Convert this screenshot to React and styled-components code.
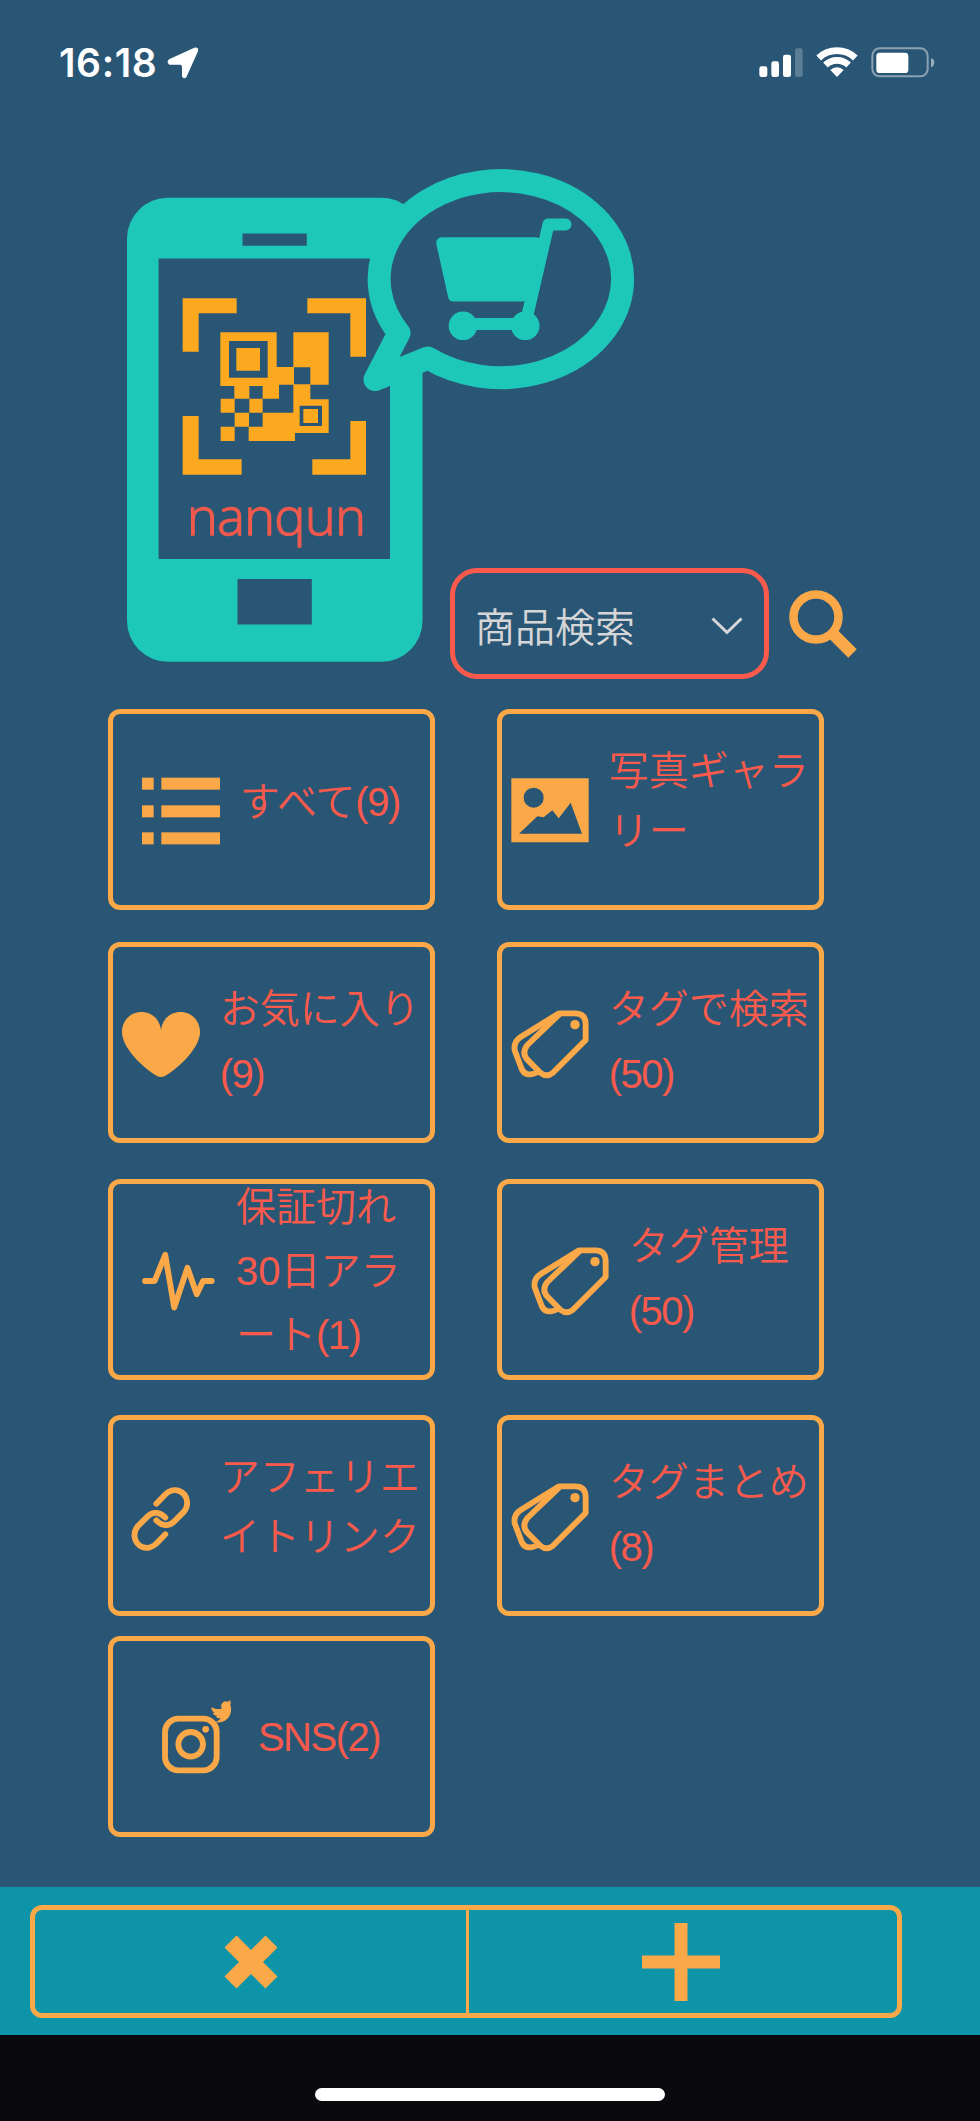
import React from "react";
import styled, { createGlobalStyle } from "styled-components";

const ListIcon = () => (
  <Icon viewBox="0 0 234 234">
    {[20, 103, 184].map((y) => (
      <g key={y}>
        <rect x="0" y={y} width="35" height="36" />
        <rect x="58" y={y} width="176" height="36" />
      </g>
    ))}
  </Icon>
);

const GalleryIcon = () => (
  <Icon viewBox="0 0 234 234">
    <path
      fillRule="evenodd"
      d="M1 22H233V214H1ZM38 80a30 30 0 1 0 60 0a30 30 0 1 0 -60 0ZM24 188H213L179 95L143 142L124 118L98 139L79 136Z"
    />
  </Icon>
);

const HeartIcon = () => (
  <Icon viewBox="0 0 234 234">
    <path d="M117 77C112 45 90 24 58 24C25 24 0 50 0 85C0 130 60 190 105 216Q117 222 129 216C174 190 234 130 234 85C234 50 209 24 176 24C144 24 122 45 117 77Z" />
  </Icon>
);

const TagsIcon = () => (
  <Icon viewBox="0 0 234 234">
    <g className="line">
      <path d="M142 29L29 99Q7 113 11 139L33 197Q41 213 59 211Q69 210 81 204" />
      <path d="M148 28H193Q224 28 224 61V108L125 207Q107 221 89 207L49 167Q31 147 49 123Z" />
    </g>
    <circle cx="192" cy="62" r="14" />
  </Icon>
);

const PulseIcon = () => (
  <Icon viewBox="0 0 220 234" $width={73}>
    <path
      className="line"
      d="M9 120H38L70 41L97 200L137 80L165 160L184 120H210"
    />
  </Icon>
);

const LinkIcon = () => (
  <Icon viewBox="0 0 234 234">
    <g className="line">
      <path d="M103 80L129 53C143 39 160 37 172 42C196 52 203 82 186 104L156 134C140 150 118 147 103 130" />
      <path d="M130 172L104 199C90 213 73 215 61 210C37 200 30 170 47 148L77 118C93 102 115 105 130 122" />
    </g>
  </Icon>
);

const SnsIcon = () => (
  <Icon viewBox="0 0 213 234" $width={71}>
    <g className="line">
      <rect x="9" y="62" width="155" height="155" rx="40" />
      <circle cx="86" cy="139" r="37" />
    </g>
    <circle cx="131" cy="94" r="10" />
    <path
      transform="translate(184 41) rotate(-20) scale(2.8) translate(-12 -12)"
      d="M23.953 4.57a10 10 0 01-2.825.775 4.958 4.958 0 002.163-2.723c-.951.555-2.005.959-3.127 1.184a4.92 4.92 0 00-8.384 4.482C7.69 8.095 4.067 6.13 1.64 3.162a4.822 4.822 0 00-.666 2.475c0 1.71.87 3.213 2.188 4.096a4.904 4.904 0 01-2.228-.616v.06a4.923 4.923 0 003.946 4.827 4.996 4.996 0 01-2.212.085 4.936 4.936 0 004.604 3.417 9.867 9.867 0 01-6.102 2.105c-.39 0-.779-.023-1.17-.067a13.995 13.995 0 007.557 2.209c9.053 0 13.998-7.496 13.998-13.985 0-.21 0-.42-.015-.63A9.935 9.935 0 0024 4.59z"
    />
  </Icon>
);

const rows = [
  {
    gap: 32,
    items: [
      { icon: ListIcon, lines: ["すべて(9)"], lift: 14 },
      { icon: GalleryIcon, lines: ["写真ギャラ", "リー"], lift: 18, leading: 60 },
    ],
  },
  {
    gap: 36,
    items: [
      { icon: HeartIcon, lines: ["お気に入り", "(9)"], lift: 1 },
      { icon: TagsIcon, lines: ["タグで検索", "(50)"], lift: 1 },
    ],
  },
  {
    gap: 35,
    items: [
      {
        icon: PulseIcon,
        lines: ["保証切れ", "30日アラ", "ート(1)"],
        lift: 17,
        leading: 64,
        space: 21.5,
      },
      { icon: TagsIcon, lines: ["タグ管理", "(50)"], lift: 1 },
    ],
  },
  {
    gap: 20,
    items: [
      { icon: LinkIcon, lines: ["アフェリエ", "イトリンク"], lift: 18, leading: 60 },
      { icon: TagsIcon, lines: ["タグまとめ", "(8)"], lift: 1 },
    ],
  },
  { gap: 49, items: [{ icon: SnsIcon, lines: ["SNS(2)"], lift: -2, space: 25 }] },
];

// tighten the counts only
const renderLine = (line) =>
  line
    .split(/(\w*\(\d+\))/)
    .filter(Boolean)
    .map((part) =>
      part.includes("(") ? <Count key={part}>{part}</Count> : part
    );

const StatusBar = () => (
  <Status>
    <div className="left">
      <span>16:18</span>
      <svg width="32" height="32" viewBox="382 51 96 96">
        <path d="M464 53L388 88Q379 97 389 104H421Q427 104 427 110V139Q431 149 440 142L475 64Q478 50 464 53Z" />
      </svg>
    </div>
    <div className="right">
      <svg width="44" height="32" viewBox="57 46 132 96">
        <rect x="58" y="107" width="24" height="32" rx="7" />
        <rect x="94" y="92" width="23" height="47" rx="7" />
        <rect x="129" y="72" width="24" height="67" rx="7" />
        <rect x="165" y="53" width="23" height="86" rx="7" opacity=".23" />
      </svg>
      <svg width="42" height="32" viewBox="227 46 126 96">
        <g fill="none" stroke="#fff" strokeWidth="20">
          <path d="M235 82A80 80 0 0 1 345 82" />
          <path d="M255.3 103A50 50 0 0 1 324.7 103" />
        </g>
        <path d="M290 139L270 118A29 29 0 0 1 310 118Z" />
      </svg>
      <svg width="64" height="32" viewBox="392 46 192 96">
        <rect
          x="396"
          y="53"
          width="166"
          height="84"
          rx="22"
          fill="none"
          stroke="#fff"
          strokeWidth="6"
          opacity=".45"
        />
        <rect x="408" y="66" width="96" height="61" rx="10" />
        <path d="M572 82Q582 86 582 96T572 110Z" opacity=".5" />
      </svg>
    </div>
  </Status>
);

const Logo = () => (
  <LogoSvg viewBox="126 168 297 494">
    <path
      className="teal"
      fillRule="evenodd"
      d="M168 197.7H381.500A41 41 0 0 1 422.500 238.700V620.800A41 41 0 0 1 381.500 661.800H168A41 41 0 0 1 127 620.800V238.700A41 41 0 0 1 168 197.700ZM158.600 258.500V559H390V258.500ZM242.500 233.500V245.700H306.800V233.500ZM237.500 579V624.600H311.800V579Z"
    />
    <path
      className="bubble"
      d="M399 333L375 379.500L428 358A121.700 98.500 0 1 0 399 333Z"
    />
    <g className="teal">
      <path
        className="cart"
        strokeWidth="11"
        d="M441.700 242.700L453.500 296H522L536 242.700Z"
      />
      <path className="cart" strokeWidth="2" d="M530 239H545L528 300H515Z" />
      <path
        className="cart open"
        strokeWidth="12"
        d="M565.500 224.400H548.500L527 317M463 324H525"
      />
      <circle cx="463" cy="325.800" r="14.300" />
      <circle cx="525.200" cy="325.800" r="14.300" />
    </g>
    <g className="code" transform="translate(170 280) scale(.33333)">
      <path d="M38 55H200V100H86V215H38ZM412 55H588V230H541V100H412ZM38 408H86V538H215V584H38ZM541 423H588V584H427V538H541Z" />
      <path
        fillRule="evenodd"
        d="M151 157H320V261H370V157H476V314H421V358H476V459H375V483H236V440H278V398H370V314H327V356H278V318H238V356H193V318H151ZM177 183V293H293V183ZM372 262V313H421V262ZM389 377V438H456V377Z"
      />
      <path d="M199 204H270V272H199ZM400 387H444V429H400ZM152 356H194V398H152ZM238 356H278V398H238ZM194 398H237V440H194ZM152 440H194V483H152Z" />
    </g>
    <text x="187" y="534.800" textLength="179">
      nanqun
    </text>
  </LogoSvg>
);

const MenuButton = ({ item }) => {
  const { icon: ItemIcon, lines, lift, leading = 65, space = 19.5 } = item;
  return (
    <Card $space={space}>
      <ItemIcon />
      <Label $lift={lift} $leading={leading}>
        {lines.map((line) => (
          <span key={line}>{renderLine(line)}</span>
        ))}
      </Label>
    </Card>
  );
};

const App = () => {
  return (
    <Wrapper>
      <GlobalStyle />
      <StatusBar />
      <Header>
        <Logo />
        <SearchSelect>
          <span>商品検索</span>
          <svg width="32" height="18" viewBox="0 0 32 18">
            <path d="M1.500 1.500L16 15.500L30.500 1.500" />
          </svg>
        </SearchSelect>
        <SearchButton aria-label="search">
          <svg width="70" height="70" viewBox="0 0 70 70">
            <circle cx="27" cy="27" r="22.500" strokeWidth="8.500" />
            <path d="M43 43L63.500 63.500" strokeWidth="12" />
          </svg>
        </SearchButton>
      </Header>
      <Menu>
        {rows.map((row, index) => (
          <Row key={index} $gap={row.gap}>
            {row.items.map((item) => (
              <MenuButton key={item.lines.join("")} item={item} />
            ))}
          </Row>
        ))}
      </Menu>
      <ActionBar>
        <ActionGroup>
          <button aria-label="close">
            <svg width="54" height="54" viewBox="0 0 54 54">
              <path d="M6.500 6.500L47.500 47.500M47.500 6.500L6.500 47.500" strokeWidth="17" />
            </svg>
          </button>
          <button aria-label="add">
            <svg width="78" height="78" viewBox="0 0 78 78">
              <path d="M39 0V78M0 39H78" strokeWidth="13" />
            </svg>
          </button>
        </ActionGroup>
      </ActionBar>
      <HomeArea>
        <span />
      </HomeArea>
    </Wrapper>
  );
};

export default App;

const GlobalStyle = createGlobalStyle`
  :root {
    --navy: #2a5675;
    --teal: #1ec8b9;
    --orange: #fba848;
    --red: #fa5a4b;
  }

  * {
    box-sizing: border-box;
  }

  body {
    margin: 0;
    background: var(--navy);
    font-family: "Liberation Sans", "Noto Sans CJK JP", sans-serif;
    font-weight: 350;
  }

  button {
    padding: 0;
    background: transparent;
    border: none;
    font: inherit;
    cursor: pointer;
  }

  svg {
    display: block;
    flex-shrink: 0;
  }
`;

const Wrapper = styled.main`
  width: 980px;
  height: 2121px;
  display: flex;
  flex-direction: column;
  overflow: hidden;
`;

const Status = styled.div`
  height: 168px;
  padding: 46px 45px 0 59px;
  display: flex;
  justify-content: space-between;
  align-items: flex-start;
  color: #fff;

  svg {
    fill: #fff;
  }

  .left,
  .right {
    display: flex;
  }

  .left {
    gap: 10px;
  }

  .left svg {
    margin-top: 1px;
  }

  .left span {
    width: 98px;
    font: 600 39px/34px Inter, sans-serif;
    letter-spacing: 0.6px;
    white-space: nowrap;
  }

  .right {
    gap: 13px;
  }
`;

const Header = styled.header`
  height: 511px;
  padding-left: 126px;
  display: flex;
  align-items: flex-end;
`;

const LogoSvg = styled.svg`
  width: 297px;
  height: 494px;
  margin-bottom: 17px;
  overflow: visible;

  .teal {
    fill: var(--teal);
  }

  .bubble {
    fill: var(--navy);
    stroke: var(--teal);
    stroke-width: 23px;
    stroke-linejoin: round;
  }

  .cart {
    stroke: var(--teal);
    stroke-linejoin: round;
    stroke-linecap: round;
  }

  .open {
    fill: none;
  }

  .code {
    fill: #fca920;
  }

  text {
    fill: #f0594d;
    stroke: #f0594d;
    stroke-width: 1.3px;
    font: 300 52px "Open Sans", "Noto Sans", sans-serif;
  }
`;

const SearchSelect = styled.div`
  width: 319px;
  height: 111px;
  margin-left: 27px;
  padding: 0 21px 0 20px;
  display: flex;
  align-items: center;
  justify-content: space-between;
  border: 5px solid var(--red);
  border-radius: 27px;
  color: #d6d6d8;
  font-size: 40px;

  span {
    line-height: 50px;
    padding-top: 8px;
  }

  svg {
    margin-top: 4px;
  }

  path {
    fill: none;
    stroke: currentColor;
    stroke-width: 3px;
  }
`;

const SearchButton = styled.button`
  margin: 0 0 19px 20px;

  svg {
    fill: none;
    stroke: var(--orange);
  }
`;

const Menu = styled.nav`
  padding: 30px 0 0 108px;
`;

const Row = styled.div`
  display: flex;
  gap: 62px;
  margin-bottom: ${({ $gap }) => $gap}px;
`;

const Card = styled.button`
  width: 327px;
  height: 201px;
  padding-right: 1px;
  display: flex;
  align-items: center;
  justify-content: center;
  gap: ${({ $space }) => $space}px;
  border: 5px solid var(--orange);
  border-radius: 12px;
  color: var(--red);
`;

const Icon = styled.svg`
  width: ${({ $width }) => $width || 78}px;
  height: 78px;
  fill: var(--orange);

  .line {
    fill: none;
    stroke: var(--orange);
    stroke-width: 17.5px;
    stroke-linecap: round;
    stroke-linejoin: round;
  }
`;

const Label = styled.span`
  display: flex;
  flex-direction: column;
  margin-bottom: ${({ $lift }) => $lift}px;
  font-size: 40px;
  line-height: ${({ $leading }) => $leading}px;
  text-align: left;
  white-space: nowrap;
`;

const Count = styled.span`
  letter-spacing: -1.5px;
`;

const ActionBar = styled.footer`
  height: 148px;
  margin-top: auto;
  padding: 18px 30px;
  background: #0e94a8;
`;

const ActionGroup = styled.div`
  width: 872px;
  height: 113px;
  display: flex;
  border: 5px solid var(--orange);
  border-radius: 12px;

  button {
    flex: 1;
    display: flex;
    align-items: center;
    justify-content: center;
  }

  button:first-child {
    flex: 0 0 431px;
  }

  button + button {
    padding-right: 4px;
    border-left: 3px solid var(--orange);
  }

  svg {
    stroke: var(--orange);
  }
`;

const HomeArea = styled.div`
  height: 86px;
  padding-top: 53px;
  background: #0a0a0e;

  span {
    display: block;
    width: 350px;
    height: 13px;
    margin: 0 auto;
    border-radius: 7px;
    background: #fff;
  }
`;
